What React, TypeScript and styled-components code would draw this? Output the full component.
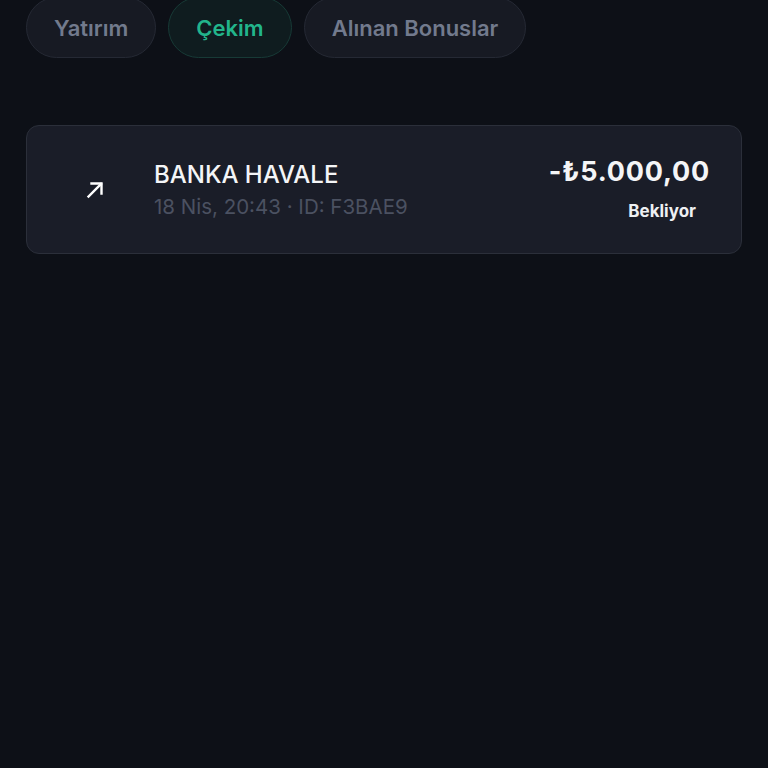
import React from "react";
import styled, { createGlobalStyle } from "styled-components";

const GlobalStyle = createGlobalStyle`
  html, body {
    margin: 0;
    padding: 0;
    background: #0d1017;
    font-family: Inter, "Noto Sans", sans-serif;
  }
`;

const Page = styled.div`
  min-height: 768px;
  background: #0d1017;
  padding: 0 26px;
  box-sizing: border-box;
  overflow: hidden;
`;

const Tabs = styled.div`
  display: flex;
  gap: 12px;
  margin-top: -3px;
`;

const Tab = styled.button<{ $active?: boolean }>`
  height: 61px;
  padding: 0 27px;
  border-radius: 31px;
  font-family: Inter, sans-serif;
  font-size: 22px;
  font-weight: 600;
  color: ${(p) => (p.$active ? "#22b58b" : "#727a8d")};
  background: ${(p) => (p.$active ? "#0f1c1f" : "#171a23")};
  border: 1px solid ${(p) => (p.$active ? "#173a36" : "#252934")};
  cursor: pointer;
`;

const Card = styled.div`
  margin-top: 67px;
  height: 129px;
  box-sizing: border-box;
  background: #1a1d28;
  border: 1px solid #2b2f3a;
  border-radius: 13px;
  display: flex;
  align-items: center;
  padding: 0 31px 0 44px;
`;

const IconBox = styled.div`
  width: 48px;
  height: 48px;
  display: flex;
  align-items: center;
  justify-content: center;
  margin-right: 35px;
  color: #ffffff;
`;

const Info = styled.div`
  flex: 1;
  display: flex;
  flex-direction: column;
  gap: 4px;
  margin-top: 1px;
`;

const Title = styled.div`
  font-size: 24px;
  font-weight: 500;
  color: #f4f5f7;
  line-height: 30px;
`;

const Sub = styled.div`
  font-size: 20.5px;
  color: #4b5161;
  line-height: 26px;
`;

const Right = styled.div`
  display: flex;
  flex-direction: column;
  align-items: flex-end;
  gap: 13px;
  margin-top: -2px;
`;

const Amount = styled.div`
  font-size: 27px;
  font-weight: 700;
  color: #f4f5f7;
  line-height: 32px;
  letter-spacing: 0.8px;
`;

const Status = styled.div`
  font-size: 17px;
  font-weight: 700;
  color: #eef0f3;
  line-height: 21px;
  padding-right: 14px;
`;

export default function App() {
  return (
    <>
      <GlobalStyle />
      <Page>
        <Tabs>
          <Tab>Yatırım</Tab>
          <Tab $active>Çekim</Tab>
          <Tab>Alınan Bonuslar</Tab>
        </Tabs>
        <Card>
          <IconBox>
            <svg width="20" height="20" viewBox="0 0 20 20" fill="none" stroke="currentColor" strokeWidth="2.4" strokeLinecap="square">
              <path d="M3.5 16.5 L16 4" />
              <path d="M6.5 3.5 H16.5 V13.5" />
            </svg>
          </IconBox>
          <Info>
            <Title>BANKA HAVALE</Title>
            <Sub>18 Nis, 20:43 · ID: F3BAE9</Sub>
          </Info>
          <Right>
            <Amount>-₺5.000,00</Amount>
            <Status>Bekliyor</Status>
          </Right>
        </Card>
      </Page>
    </>
  );
}
